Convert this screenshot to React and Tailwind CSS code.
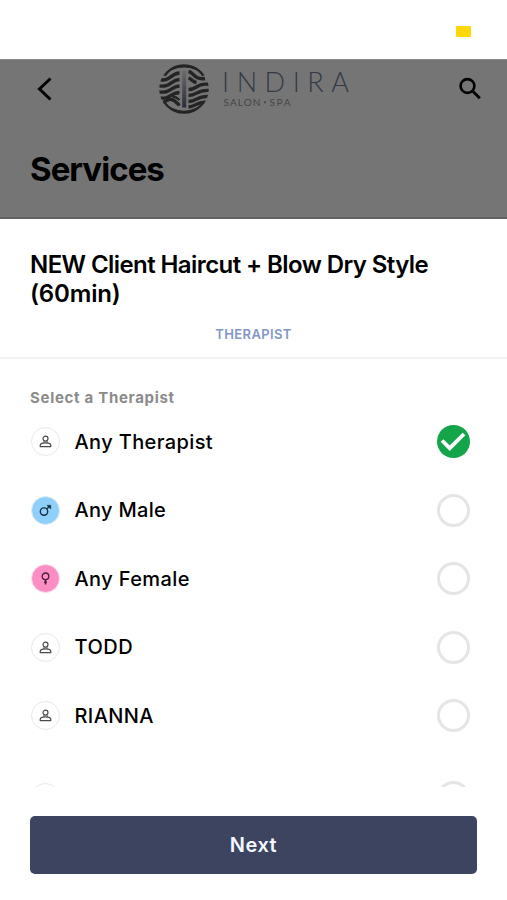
const therapists = [
  { id: 1, name: "Any Therapist", type: "person", tracking: "tracking-[0.38px]" },
  { id: 2, name: "Any Male", type: "male", tracking: "tracking-[0.3px]" },
  { id: 3, name: "Any Female", type: "female", tracking: "tracking-[0.38px]" },
  { id: 4, name: "TODD", type: "person", tracking: "tracking-[0.5px]" },
  { id: 5, name: "RIANNA", type: "person", tracking: "tracking-[0.4px]" },
];

function Logo() {
  return (
    <svg width="196" height="54" viewBox="0 0 196 54" className="-ml-[2px] shrink-0">
      <defs>
        <clipPath id="disc">
          <circle cx="27" cy="27" r="24.8" />
        </clipPath>
        <linearGradient id="bar" x1="0" y1="0" x2="0" y2="1">
          <stop offset="0" stopColor="#6c6c6d" />
          <stop offset="1" stopColor="#292d39" />
        </linearGradient>
      </defs>
      <g clipPath="url(#disc)" fill="none" stroke="#242425" strokeWidth="3.4">
        <path d="M7 13.500C13.500 0 40.500 0 47 13.500" strokeWidth="4" />
        <path d="M7 40.500C13.500 54 40.500 54 47 40.500" strokeWidth="4" />
        <path d="M3 17.500C13 20 13 11.500 22.500 11" />
        <path d="M0 23.500C14 26.500 13 18 22.500 17.500" />
        <path d="M0 29.500C14 32.500 13 24.500 22.500 24" />
        <path d="M0 35.500C14 38.500 13 30.500 22.500 30.500" />
        <path d="M5 41.500C13 35.500 16 36 22.500 43.500" />
        <path d="M15.500 35C18 34.500 20 35.500 22.500 38" strokeWidth="2.400" />
        <path d="M31.500 9.500C37 10.500 37 18 48 16.500" />
        <path d="M31.500 16C34.500 17 36 20 39.500 20.500" />
        <path d="M31.500 27.500C41 27.500 39 20.500 54 22.500" />
        <path d="M31.500 33.500C41 33.500 39 27 54 28.500" />
        <path d="M31.500 39.500C41 39.500 39 33 54 34.500" />
        <path d="M31.500 45C40 44.500 39 39 51 40.500" />
      </g>
      <rect x="25.200" y="8.500" width="4" height="37" fill="url(#bar)" />
      <text
        x="65"
        y="29.500"
        textLength="127"
        fontFamily="Lato, sans-serif"
        fontSize="27"
        fontWeight="300"
        fill="#343a45"
      >
        INDIRA
      </text>
      <text
        x="66.500"
        y="43.700"
        textLength="37"
        fontFamily="Lato, sans-serif"
        fontSize="10"
        fill="#444549"
      >
        SALON
      </text>
      <circle cx="108" cy="40.300" r="1.100" fill="#444549" />
      <text
        x="112.500"
        y="43.700"
        textLength="21"
        fontFamily="Lato, sans-serif"
        fontSize="10"
        fill="#444549"
      >
        SPA
      </text>
    </svg>
  );
}

function PersonIcon() {
  return (
    <svg width="13" height="13" viewBox="0 0 13 13" fill="none" stroke="#4a4a4a" strokeWidth="1.200">
      <circle cx="6.500" cy="3.600" r="2.500" />
      <path d="M5 5.800L4.800 7.900M8 5.800L8.200 7.900" strokeWidth="0.900" />
      <path d="M1.200 11.600V10.600C1.200 8.700 3 7.900 6.500 7.900S11.800 8.700 11.800 10.600V11.600Z" strokeLinejoin="round" />
    </svg>
  );
}

function MaleIcon() {
  return (
    <svg width="13" height="13" viewBox="0 0 13 13" fill="none" stroke="#16303f" strokeWidth="1.400">
      <circle cx="5" cy="7.600" r="3.700" />
      <path d="M7.700 4.900L10.500 2.300" />
      <path d="M8 1.300H11.700V5Z" fill="#16303f" strokeWidth="0.600" />
    </svg>
  );
}

function FemaleIcon() {
  return (
    <svg width="13" height="13" viewBox="0 0 13 13" fill="none" stroke="#4c1d38" strokeWidth="1.300">
      <circle cx="6.500" cy="4.300" r="3.300" />
      <path d="M6.500 7.600V12.500" strokeWidth="1.600" />
      <path d="M5 10.200H8" />
    </svg>
  );
}

function Avatar({ type }) {
  if (type === "male") {
    return (
      <span className="flex size-[29px] items-center justify-center rounded-full border border-[#e3eef5] bg-[#8fcffb]">
        <MaleIcon />
      </span>
    );
  }
  if (type === "female") {
    return (
      <span className="flex size-[29px] items-center justify-center rounded-full border border-[#f6e3ed] bg-[#fc8ec5]">
        <FemaleIcon />
      </span>
    );
  }
  return (
    <span className="flex size-[29px] items-center justify-center rounded-full border-[1.5px] border-[#e8e8e8] bg-white">
      <PersonIcon />
    </span>
  );
}

function Radio({ checked }) {
  if (checked) {
    return (
      <span className="flex size-[33px] items-center justify-center rounded-full bg-[#14a44a]">
        <svg width="28" height="24" viewBox="0 0 28 24" fill="none" stroke="#fff" strokeWidth="3.800">
          <path d="M3 10.500L10.700 18.200L25 4" />
        </svg>
      </span>
    );
  }
  return <span className="size-[33px] rounded-full border-[3px] border-[#e5e5e5] bg-white" />;
}

export default function App() {
  const selected = 1;

  return (
    <div className="flex h-[900px] w-[507px] flex-col overflow-hidden bg-white font-['Inter',sans-serif] text-black">
      {/* Status bar */}
      <div className="flex h-[59px] shrink-0 justify-end pt-[26px] pr-9">
        <div className="h-[11px] w-[15px] rounded-[1px] bg-[#ffd60a]" />
      </div>

      {/* Dimmed page header */}
      <header className="h-40 shrink-0 border-t border-b-2 border-t-[#8a8a8a] border-b-[#626262] bg-[#757575]">
        <div className="flex h-[58px] items-center justify-between pr-[25px] pl-[36px]">
          <svg width="17" height="26" viewBox="0 0 17 26" fill="none" stroke="#000" strokeWidth="3">
            <path d="M14.500 2.500L3.500 13L14.500 23.500" />
          </svg>
          <Logo />
          <svg width="24" height="24" viewBox="0 0 24 24" fill="none" stroke="#000" strokeWidth="2.600">
            <circle cx="9.500" cy="9" r="6.900" />
            <path d="M14.300 13.800L21.800 21.300" strokeWidth="3" />
          </svg>
        </div>
        <h1 className="mt-[30px] pl-[30px] text-[33px] leading-[42px] font-bold tracking-[-0.95px]">Services</h1>
      </header>

      {/* Service sheet */}
      <div className="h-[140px] shrink-0 border-b-2 border-[#f3f3f3] px-[30px] pt-[31px]">
        <h2 className="text-[24px] leading-[29px] font-semibold tracking-[-0.58px]">
          NEW Client Haircut + Blow Dry Style
          <br />
          <span className="tracking-[-0.15px]">(60min)</span>
        </h2>
        <p className="mt-[18px] text-center text-[13px] leading-4 font-semibold tracking-[0.35px] text-[#8296c9]">THERAPIST</p>
      </div>

      <div className="h-[428px] shrink-0 overflow-hidden px-[30px] pt-[28px]">
        <p className="h-[20.5px] text-[15px] leading-[21px] font-bold tracking-[0.7px] text-[#8b8b8b]">Select a Therapist</p>
        {therapists.map((item) => (
          <div key={item.id} className="flex h-[68.5px] items-center pr-[7.5px] pl-[0.5px]">
            <Avatar type={item.type} />
            <span className={`ml-[15px] flex-1 text-[20px] leading-6 font-medium ${item.tracking}`}>{item.name}</span>
            <Radio checked={item.id === selected} />
          </div>
        ))}
        <div className="mt-[13px] flex h-[68.5px] items-center justify-between pr-[7.5px] pl-[0.5px]">
          <Avatar type="person" />
          <Radio checked={false} />
        </div>
      </div>

      <div className="px-[30px] pt-[29px]">
        <button className="h-[58px] w-full rounded-[5px] bg-[#3c4460] text-[20px] font-semibold tracking-[0.5px] text-[#f3f7ff]">
          Next
        </button>
      </div>
    </div>
  );
}
